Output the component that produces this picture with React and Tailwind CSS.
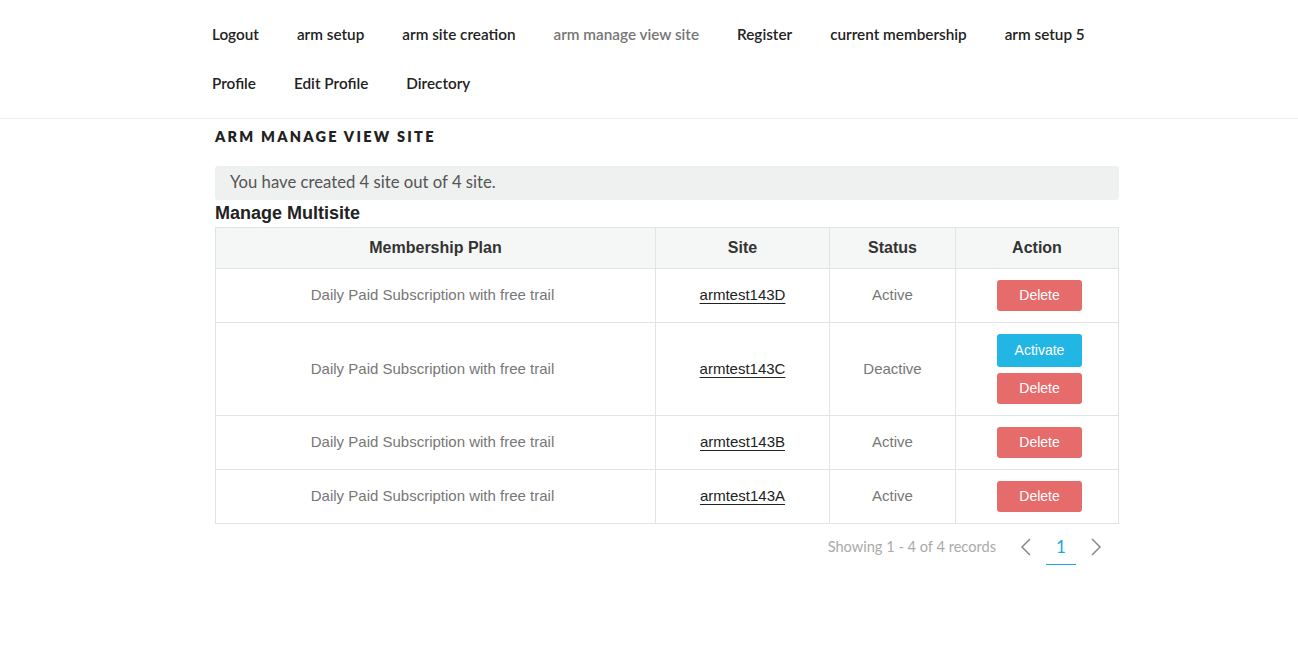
import React from "react";

const navRow1 = ["Logout", "arm setup", "arm site creation", "arm manage view site", "Register", "current membership", "arm setup 5"];
const navRow2 = ["Profile", "Edit Profile", "Directory"];

const rows = [
  { plan: "Daily Paid Subscription with free trail", site: "armtest143D", status: "Active", activate: false },
  { plan: "Daily Paid Subscription with free trail", site: "armtest143C", status: "Deactive", activate: true },
  { plan: "Daily Paid Subscription with free trail", site: "armtest143B", status: "Active", activate: false },
  { plan: "Daily Paid Subscription with free trail", site: "armtest143A", status: "Active", activate: false },
];

const NavItem = ({ label }) => (
  <span
    className={
      "text-[15.3px] font-semibold leading-none " +
      (label === "arm manage view site" ? "text-[#767676]" : "text-[#222]")
    }
  >
    {label}
  </span>
);

const App = () => {
  return (
    <div className="min-h-[648px] bg-white font-['Lato',sans-serif]">
      {/* top nav */}
      <div className="border-b border-[#eee]">
        <div className="ml-[212px] w-[920px] pt-[26px] pb-[26px]">
          <div className="flex gap-x-[38px] h-[17px] items-center">
            {navRow1.map((l) => (
              <NavItem key={l} label={l} />
            ))}
          </div>
          <div className="flex gap-x-[38px] h-[17px] items-center mt-[32px]">
            {navRow2.map((l) => (
              <NavItem key={l} label={l} />
            ))}
          </div>
        </div>
      </div>

      <div className="ml-[215px] w-[904px]">
        <h2 className="mt-[10px] text-[14.5px] font-extrabold tracking-[0.155em] text-[#222] leading-[16px]">
          ARM MANAGE VIEW SITE
        </h2>

        <div className="mt-[21px] bg-[#eff0f0] rounded-[3px] h-[34px] flex items-center px-[15px] text-[16.7px] text-[#555]">
          You have created 4 site out of 4 site.
        </div>

        <div className="font-['Liberation_Sans',Arial,sans-serif]">
          <h3 className="text-[18px] font-bold text-[#222] leading-[27px]">Manage Multisite</h3>

          <table className="w-full border-collapse text-center">
            <thead>
              <tr className="bg-[#f5f7f6] h-[41px]">
                <th className="w-[440px] border border-[#dfe4e4] text-[16px] font-bold text-[#333]">Membership Plan</th>
                <th className="w-[174px] border border-[#dfe4e4] text-[16px] font-bold text-[#333]">Site</th>
                <th className="w-[126px] border border-[#dfe4e4] text-[16px] font-bold text-[#333]">Status</th>
                <th className="border border-[#dfe4e4] text-[16px] font-bold text-[#333]">Action</th>
              </tr>
            </thead>
            <tbody>
              {rows.map((r) => (
                <tr key={r.site} className={r.activate ? "h-[93px]" : "h-[54px]"}>
                  <td className="border border-[#dfe4e4] pr-[6px] text-[15px] text-[#777]">{r.plan}</td>
                  <td className="border border-[#dfe4e4] text-[15px]">
                    <span className="text-[#222] underline underline-offset-[3px]">{r.site}</span>
                  </td>
                  <td className="border border-[#dfe4e4] text-[15px] text-[#777]">{r.status}</td>
                  <td className="border border-[#dfe4e4] pl-[5px]">
                    <div className="flex flex-col items-center gap-[6px]">
                      {r.activate && (
                        <button className="w-[85px] h-[33px] rounded-[3px] bg-[#22b6e4] text-white text-[14px]">
                          Activate
                        </button>
                      )}
                      <button className="w-[85px] h-[31px] rounded-[3px] bg-[#e66b6b] text-white text-[14px]">
                        Delete
                      </button>
                    </div>
                  </td>
                </tr>
              ))}
            </tbody>
          </table>
        </div>

        {/* pagination */}
        <div className="flex justify-end items-center mt-[6px] pr-[17px] font-['Lato',sans-serif]">
          <span className="text-[14.6px] text-[#aaa]">Showing 1 - 4 of 4 records</span>
          <svg className="ml-[24px]" width="12" height="20" viewBox="0 0 12 20" fill="none" stroke="#888" strokeWidth="1.5">
            <path d="M10 2 L2 10 L10 18" />
          </svg>
          <span className="ml-[14px] w-[30px] text-center text-[17px] text-[#1ba6e0] border-b border-[#1ba6e0] pt-[4px] pb-[4px]">
            1
          </span>
          <svg className="ml-[14px]" width="12" height="20" viewBox="0 0 12 20" fill="none" stroke="#888" strokeWidth="1.5">
            <path d="M2 2 L10 10 L2 18" />
          </svg>
        </div>
      </div>
    </div>
  );
};

export default App;
